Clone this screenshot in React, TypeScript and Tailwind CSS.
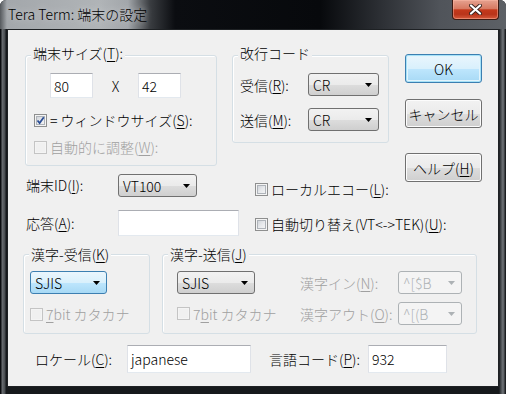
import type { ReactNode } from 'react';
import clsx from 'clsx';

function Mn({ children }: { children: ReactNode }) {
  return <span className="underline decoration-1 underline-offset-[2px]">{children}</span>;
}

function Edit({ value, className }: { value?: string; className: string }) {
  return (
    <div
      className={clsx(
        'flex items-center border border-t-[#abadb3] border-x-[#dfe2e8] border-b-[#e3e9ef] bg-white pl-[3px] leading-[16px]',
        className,
      )}
    >
      {value}
    </div>
  );
}

function Arrow({ disabled }: { disabled?: boolean }) {
  return (
    <svg width="7" height="4" viewBox="0 0 7 4" className="shrink-0">
      <polygon points="0,0 7,0 3.5,4" fill={disabled ? '#adb2b5' : '#000'} />
    </svg>
  );
}

type Look = 'normal' | 'focus' | 'off';

function Combo({ value, look = 'normal', className }: { value: string; look?: Look; className: string }) {
  return (
    <div
      className={clsx(
        'flex h-[23px] shrink-0 items-center justify-between rounded-[3px] border pl-[4px] pr-[6px] leading-[16px]',
        look === 'normal' &&
          'border-[#707070] bg-[linear-gradient(180deg,#f2f2f2_0%,#ebebeb_50%,#dddddd_51%,#cfcfcf_100%)] text-black',
        look === 'focus' &&
          'border-[#3c7fb1] bg-[linear-gradient(180deg,#eaf6fd_0%,#d9f0fc_50%,#bee6fd_51%,#a7d9f5_100%)] text-black',
        look === 'off' && 'border-[#adb2b5] bg-[#f4f4f4] text-[#adb2b5]',
        className,
      )}
    >
      <span>{value}</span>
      <Arrow disabled={look === 'off'} />
    </div>
  );
}

function Button({ children, primary, className }: { children: ReactNode; primary?: boolean; className?: string }) {
  return (
    <div
      className={clsx(
        'flex h-[29px] w-[77px] items-center justify-center whitespace-nowrap rounded-[3px] border leading-[16px] text-black',
        primary
          ? 'border-[#3c7fb1] bg-[linear-gradient(180deg,#eaf6fd_0%,#d9f0fc_50%,#bee6fd_51%,#a7d9f5_100%)] shadow-[inset_0_0_0_1px_#a7e2f8,inset_0_0_0_2px_#e3f4fc]'
          : 'border-[#707070] bg-[linear-gradient(180deg,#f2f2f2_0%,#ebebeb_50%,#dddddd_51%,#cfcfcf_100%)] shadow-[inset_0_0_0_1px_#fcfcfc]',
        className,
      )}
    >
      {children}
    </div>
  );
}

function CheckBox({ children, checked, disabled }: { children: ReactNode; checked?: boolean; disabled?: boolean }) {
  return (
    <div
      className={clsx(
        'flex h-[16px] items-center gap-[3px] whitespace-nowrap leading-[16px]',
        disabled ? 'text-[#a0a0a0]' : 'text-black',
      )}
    >
      <span
        className={clsx(
          'flex h-[13px] w-[13px] shrink-0 items-center justify-center border p-[1px]',
          disabled ? 'border-[#c4c4c4] bg-[#f4f4f4]' : 'border-[#8e8f8f] bg-[#f4f4f4]',
        )}
      >
        <span
          className={clsx(
            'relative flex h-full w-full items-center justify-center',
            disabled
              ? 'bg-[#f0f0f0]'
              : 'bg-[linear-gradient(135deg,#cbcfd5_0%,#e6e8eb_50%,#f6f6f6_100%)] shadow-[inset_0_0_0_1px_#aeb3b9]',
          )}
        >
          {checked && (
            <svg width="9" height="9" viewBox="0 0 9 9" className="absolute">
              <path d="M1.5 4.5 L3.6 7 L7.8 1.2" fill="none" stroke="#2b4e95" strokeWidth="1.8" />
            </svg>
          )}
        </span>
      </span>
      <span>{children}</span>
    </div>
  );
}

function Group({
  label,
  lift,
  className,
  children,
}: {
  label: ReactNode;
  lift?: boolean;
  className: string;
  children: ReactNode;
}) {
  return (
    <div
      className={clsx(
        'flex shrink-0 flex-col rounded-[3px] border border-[#d5dfe5] shadow-[inset_1px_1px_0_#fff]',
        className,
      )}
    >
      <span
        className={clsx(
          'ml-[5px] w-fit whitespace-nowrap bg-[#f0f0f0] px-[2px] leading-[16px]',
          lift ? '-mt-[11px]' : '-mt-[9px]',
        )}
      >
        {label}
      </span>
      {children}
    </div>
  );
}

function TitleBar() {
  return (
    <div className="flex h-[29px] items-start justify-between bg-[linear-gradient(90deg,#55595d_0px,#a3a7ab_7px,#b0b4b7_100px,#a2a6aa_128px,#3a3d41_150px,#0b0d11_175px,#07090c_320px,#2c2f34_380px,#50545a_440px,#5d6166_506px)]">
      <span className="pl-[8px] text-[14px] leading-[29px] text-black [text-shadow:0_0_6px_#d8dadc]">
        Tera Term: 端末の設定
      </span>
      <div className="mr-[7px] flex h-[20px] w-[47px] items-center justify-center rounded-b-[4px] border border-t-0 border-[#3d1a12] bg-[linear-gradient(180deg,#e6a290_0%,#d77a62_45%,#c4391c_52%,#b9341a_75%,#d65a3c_100%)] shadow-[inset_0_0_0_1px_rgba(255,190,170,0.45)]">
        <svg width="13" height="11" viewBox="0 0 13 11">
          <path d="M2 1.5 L11 9.5 M11 1.5 L2 9.5" stroke="#3a2520" strokeWidth="4" strokeLinecap="round" />
          <path d="M2 1.5 L11 9.5 M11 1.5 L2 9.5" stroke="#fff" strokeWidth="2.2" strokeLinecap="round" />
        </svg>
      </div>
    </div>
  );
}

export default function App() {
  return (
    <div className="flex h-[394px] w-[506px] flex-col overflow-hidden rounded-t-[6px] bg-[#16191c] text-[14px] font-light [font-family:'Noto_Sans_CJK_JP','Noto_Sans',sans-serif]">
      <TitleBar />
      <div className="flex flex-1 bg-[linear-gradient(90deg,#0b0d10_0px,#0b0d10_1px,#6b6f73_2px,#474b4f_5px,#16191c_6px,#16191c_calc(100%_-_7px),#474b4f_calc(100%_-_5px),#72767a_calc(100%_-_3px),#0b0d10_100%)] px-[7px] pb-[7px]">
        <div className="h-[358px] w-[492px] border border-[#1e2124] bg-[#f0f0f0] text-black">
          {/* 上段 */}
          <div className="flex items-start">
            <div className="flex w-[381px] shrink-0 flex-col">
              <div className="mt-[25px] flex items-start">
                <Group
                  lift
                  className="ml-[17px] h-[111px] w-[192px]"
                  label={
                    <>
                      端末サイズ(<Mn>T</Mn>):
                    </>
                  }
                >
                  <div className="mt-[12px] flex items-center">
                    <Edit value="80" className="ml-[24px] h-[25px] w-[43px]" />
                    <span className="w-[45px] text-center leading-[16px]">X</span>
                    <Edit value="42" className="h-[25px] w-[43px]" />
                  </div>
                  <div className="ml-[8px] mt-[14px]">
                    <CheckBox checked>
                      = ウィンドウサイズ(<Mn>S</Mn>):
                    </CheckBox>
                  </div>
                  <div className="ml-[8px] mt-[11px]">
                    <CheckBox disabled>
                      自動的に調整(<Mn>W</Mn>):
                    </CheckBox>
                  </div>
                </Group>

                <Group lift className="ml-[15px] h-[88px] w-[157px]" label="改行コード">
                  <div className="mt-[12px] flex h-[23px] items-center">
                    <span className="ml-[7px] w-[68px] leading-[16px]">
                      受信(<Mn>R</Mn>):
                    </span>
                    <Combo value="CR" className="w-[71px]" />
                  </div>
                  <div className="mt-[12px] flex h-[23px] items-center">
                    <span className="ml-[7px] w-[68px] leading-[16px]">
                      送信(<Mn>M</Mn>):
                    </span>
                    <Combo value="CR" className="w-[71px]" />
                  </div>
                </Group>
              </div>

              <div className="mt-[8px] flex items-start">
                <span className="ml-[18px] w-[92px] shrink-0 leading-[23px]">
                  端末ID(<Mn>I</Mn>):
                </span>
                <Combo value="VT100" className="w-[79px]" />
                <div className="ml-[58px] mt-[7px]">
                  <CheckBox>
                    ローカルエコー(<Mn>L</Mn>):
                  </CheckBox>
                </div>
              </div>

              <div className="mt-[13px] flex items-start">
                <span className="ml-[18px] w-[92px] shrink-0 leading-[26px]">
                  応答(<Mn>A</Mn>):
                </span>
                <Edit className="h-[26px] w-[121px] shrink-0" />
                <div className="ml-[16px] mt-[6px]">
                  <CheckBox>
                    自動切り替え(VT&lt;-&gt;TEK)(<Mn>U</Mn>):
                  </CheckBox>
                </div>
              </div>
            </div>

            <div className="ml-[16px] mt-[24px] flex flex-col">
              <Button primary>OK</Button>
              <Button className="mt-[16px]">キャンセル</Button>
              <Button className="mt-[25px]">
                ヘルプ(<Mn>H</Mn>)
              </Button>
            </div>
          </div>

          {/* 漢字コード */}
          <div className="mt-[18px] flex items-start">
            <Group
              className="ml-[15px] h-[80px] w-[127px]"
              label={
                <>
                  漢字-受信(<Mn>K</Mn>)
                </>
              }
            >
              <Combo value="SJIS" look="focus" className="ml-[6px] mt-[9px] w-[77px]" />
              <div className="ml-[6px] mt-[12px]">
                <CheckBox disabled>
                  <Mn>7</Mn>bit カタカナ
                </CheckBox>
              </div>
            </Group>

            <Group
              className="ml-[12px] h-[80px] w-[315px]"
              label={
                <>
                  漢字-送信(<Mn>J</Mn>)
                </>
              }
            >
              <div className="mt-[9px] flex h-[23px] items-center">
                <Combo value="SJIS" className="ml-[14px] w-[78px]" />
                <span className="ml-[45px] w-[98px] shrink-0 whitespace-nowrap leading-[16px] text-[#a0a0a0]">
                  漢字イン(<Mn>N</Mn>):
                </span>
                <Combo value="^[$B" look="off" className="w-[64px]" />
              </div>
              <div className="mt-[8px] flex h-[23px] items-center">
                <div className="ml-[14px] w-[123px] shrink-0">
                  <CheckBox disabled>
                    7<Mn>b</Mn>it カタカナ
                  </CheckBox>
                </div>
                <span className="w-[98px] shrink-0 whitespace-nowrap leading-[16px] text-[#a0a0a0]">
                  漢字アウト(<Mn>O</Mn>):
                </span>
                <Combo value="^[(B" look="off" className="w-[64px]" />
              </div>
            </Group>
          </div>

          {/* ロケール */}
          <div className="mt-[11px] flex h-[28px] items-center">
            <span className="ml-[27px] w-[92px] shrink-0 leading-[16px]">
              ロケール(<Mn>C</Mn>):
            </span>
            <Edit value="japanese" className="h-[28px] w-[124px] shrink-0" />
            <span className="ml-[18px] w-[99px] shrink-0 leading-[16px]">
              言語コード(<Mn>P</Mn>):
            </span>
            <Edit value="932" className="h-[28px] w-[79px] shrink-0" />
          </div>
        </div>
      </div>
    </div>
  );
}
